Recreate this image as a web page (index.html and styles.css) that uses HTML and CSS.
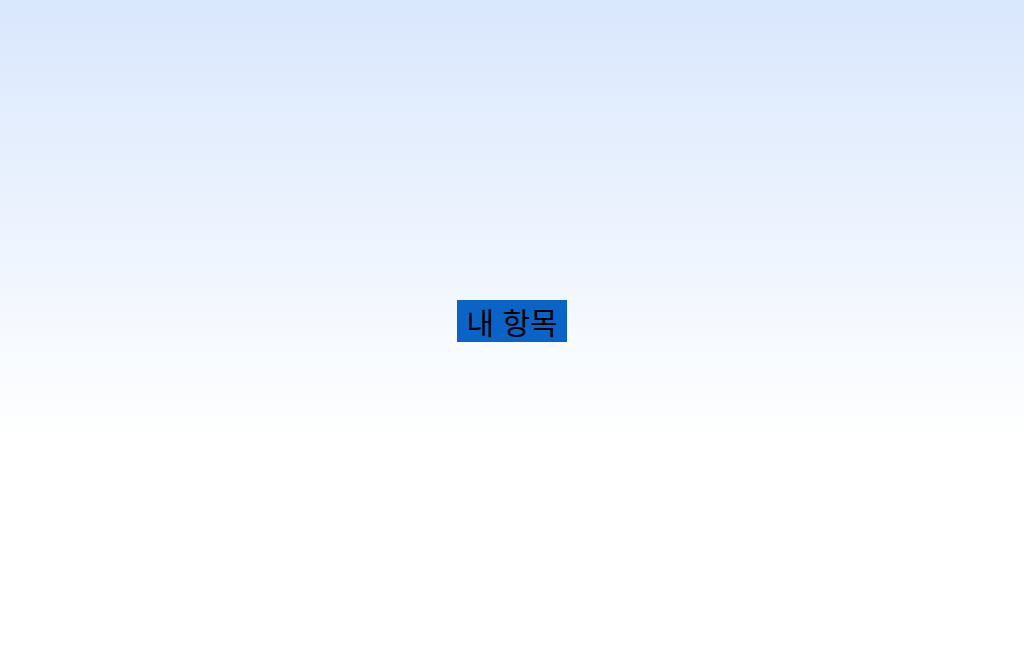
FILE: index.html
```html
<!DOCTYPE html>
<html lang="ko">
<head>
<meta charset="utf-8">
<title>내 항목</title>
<link rel="stylesheet" href="styles.css">
</head>
<body>
<main class="stage">
  <span class="label">내 항목</span>
</main>
</body>
</html>
```

FILE: styles.css
```css
html, body {
  margin: 0;
  padding: 0;
  height: 100%;
}
body {
  background: linear-gradient(to bottom, #d9e7fd 0px, #ffffff 440px) no-repeat #ffffff;
  font-family: "Noto Sans CJK KR", "Noto Sans", sans-serif;
}
.stage {
  height: 100%;
  display: flex;
  align-items: center;
  justify-content: center;
}
.label {
  display: inline-block;
  background: #0a64c8;
  color: #000;
  font-size: 30px;
  font-weight: 400;
  line-height: 42px;
  padding: 0 9px;
  margin-top: -7px;
}
```
